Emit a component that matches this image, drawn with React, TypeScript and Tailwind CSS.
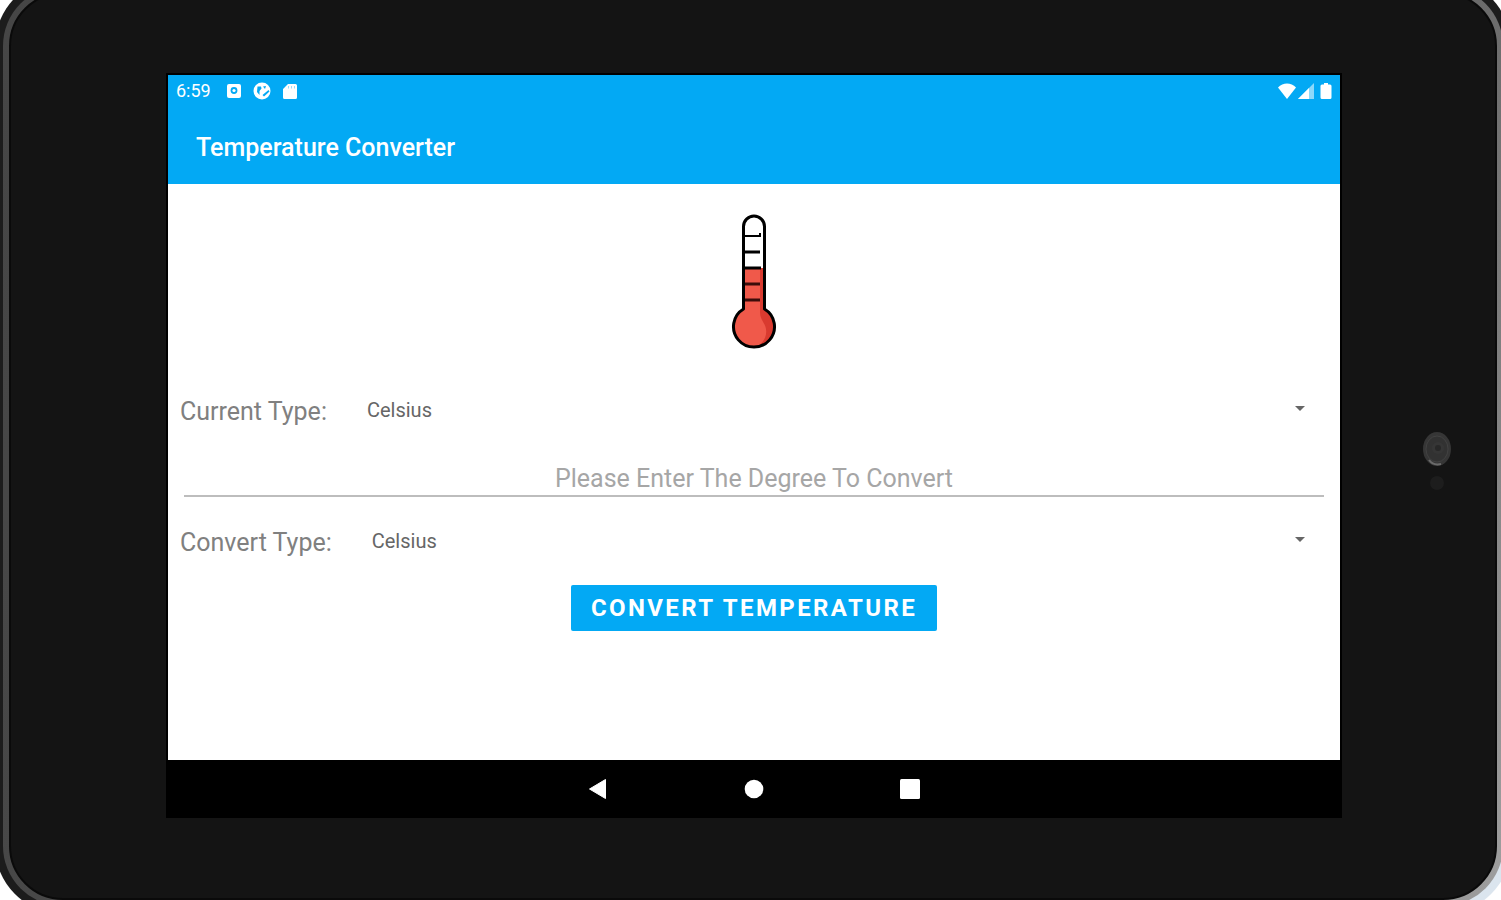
import { useState } from "react";
import { MdArrowDropDown } from "react-icons/md";

type Unit = "Celsius" | "Fahrenheit" | "Kelvin";

const units: Unit[] = ["Celsius", "Fahrenheit", "Kelvin"];

interface TypeRowProps {
  id: string;
  label: string;
  value: Unit;
  onChange: (unit: Unit) => void;
}

function convert(degree: number, from: Unit, to: Unit) {
  let celsius = degree;
  if (from === "Fahrenheit") celsius = ((degree - 32) * 5) / 9;
  if (from === "Kelvin") celsius = degree - 273.15;

  if (to === "Fahrenheit") return (celsius * 9) / 5 + 32;
  if (to === "Kelvin") return celsius + 273.15;
  return celsius;
}

function StatusBar() {
  return (
    <div className="flex h-8 items-center justify-between px-2 text-white">
      <div className="flex items-center gap-3">
        <span className="mr-1 text-lg leading-8">6:59</span>
        <svg width="14" height="14" viewBox="0 0 14 14" aria-hidden="true">
          <rect width="14" height="14" rx="2" fill="#fff" />
          <circle cx="7" cy="6.5" r="3.4" fill="#03a9f4" />
          <circle cx="7" cy="6.5" r="1.6" fill="#fff" />
        </svg>
        <svg width="18" height="18" viewBox="0 0 18 18" aria-hidden="true">
          <circle cx="9" cy="9" r="8.5" fill="#fff" />
          <path d="M4.500 4.500h3.500l.5 2-2 2.500v4L4 10z" fill="#03a9f4" />
          <path d="M10 4.500l3-.5-1 3zM15.500 8l1 1.500-5.500 5-1.500-1.500z" fill="#03a9f4" />
        </svg>
        <svg width="14" height="17" viewBox="0 0 14 17" aria-hidden="true">
          <path d="M5 1h7.500A1.500 1.500 0 0 1 14 2.500v12a1.500 1.500 0 0 1-1.500 1.500h-11A1.500 1.500 0 0 1 0 14.500V6z" fill="#fff" />
          <path d="M5.500 3v2.500M8.500 3v2.500M11.500 3v2.500" stroke="#03a9f4" strokeOpacity=".4" />
        </svg>
      </div>
      <div className="flex items-center gap-0.5">
        <svg width="18" height="16" viewBox="0 0 18 16" aria-hidden="true">
          <path d="M9 16L0 4.500C5-.8 13-.8 18 4.500z" fill="#fff" />
        </svg>
        <svg width="16" height="16" viewBox="0 0 16 16" aria-hidden="true">
          <path d="M0 16L16 0v16z" fill="#fff" fillOpacity=".55" />
          <path d="M0 16L11 5v11z" fill="#fff" />
        </svg>
        <svg className="ml-1" width="12" height="16" viewBox="0 0 12 16" aria-hidden="true">
          <path d="M4 0h4v1.500h2A1.500 1.500 0 0 1 11.500 3v11.500A1.500 1.500 0 0 1 10 16H2a1.500 1.500 0 0 1-1.500-1.500V3A1.500 1.500 0 0 1 2 1.500h2z" fill="#fff" />
        </svg>
      </div>
    </div>
  );
}

function Thermometer() {
  return (
    <svg width="46" height="136" viewBox="0 0 46 136" role="img" aria-label="Thermometer">
      <path
        d="M12.500 95V12.500a10.500 10.500 0 0 1 21 0V95A20.500 20.500 0 1 1 12.500 95z"
        fill="#fff"
      />
      <path d="M12.500 54h21v41A20.500 20.500 0 1 1 12.500 95z" fill="#f0594a" />
      <path d="M29 54h4.500v41a20.500 20.500 0 0 1-9 38.500c10-5 13-15 9-23-2-4-4.500-7-4.500-12z" fill="#d93a2f" />
      <path d="M12 22h17v-3" fill="none" stroke="#000" strokeWidth="2" />
      <path d="M12 38h17M12 54h18" fill="none" stroke="#000" strokeWidth="3" />
      <path d="M12 70h17M12 86h17" fill="none" stroke="#3a0d0a" strokeWidth="3" />
      <path
        d="M12.500 95V12.500a10.500 10.500 0 0 1 21 0V95A20.500 20.500 0 1 1 12.500 95z"
        fill="none"
        stroke="#000"
        strokeWidth="3"
        strokeLinejoin="round"
      />
    </svg>
  );
}

function TypeRow({ id, label, value, onChange }: TypeRowProps) {
  return (
    <div className="flex items-end gap-9 px-3">
      <label htmlFor={id} className="text-[25px] leading-9 text-[#808080]">
        {label}
      </label>
      <div className="relative flex-1">
        <select
          id={id}
          value={value}
          onChange={(e) => onChange(e.target.value as Unit)}
          className="block h-10 w-full appearance-none bg-transparent pl-1 text-xl text-[#666666] outline-none"
        >
          {units.map((unit) => (
            <option key={unit} value={unit}>
              {unit}
            </option>
          ))}
        </select>
        <MdArrowDropDown className="pointer-events-none absolute right-4 top-1.5 size-6 text-[#666666]" />
      </div>
    </div>
  );
}

function NavBar() {
  return (
    <nav className="flex h-[58px] items-center justify-center gap-[136px] bg-black">
      <button type="button" aria-label="Back">
        <svg width="20" height="22" viewBox="0 0 20 22" aria-hidden="true">
          <path d="M1.500 11L17.500 1.500v19z" fill="#fff" stroke="#fff" strokeLinejoin="round" />
        </svg>
      </button>
      <button type="button" aria-label="Home">
        <svg width="20" height="20" viewBox="0 0 20 20" aria-hidden="true">
          <circle cx="10" cy="10" r="9.300" fill="#fff" />
        </svg>
      </button>
      <button type="button" aria-label="Recent apps">
        <svg width="20" height="20" viewBox="0 0 20 20" aria-hidden="true">
          <rect width="20" height="20" rx="1.500" fill="#fff" />
        </svg>
      </button>
    </nav>
  );
}

export default function App() {
  const [currentType, setCurrentType] = useState<Unit>("Celsius");
  const [convertType, setConvertType] = useState<Unit>("Celsius");
  const [degree, setDegree] = useState("");

  const handleConvert = () => {
    if (degree.trim() === "" || Number.isNaN(Number(degree))) return;
    setDegree(convert(Number(degree), currentType, convertType).toFixed(2));
  };

  return (
    <div className="flex min-h-screen overflow-hidden bg-white font-[Roboto,sans-serif]">
      {/* Tablet body */}
      <div className="-mb-3.5 -ml-[5px] -mr-2.5 -mt-[22px] flex flex-1 rounded-[68px] bg-[linear-gradient(135deg,#1c1c1c_94%,#dbe5ee_96%)] p-2">
        <div className="flex flex-1 rounded-[60px] bg-[linear-gradient(110deg,#464646_0%,#4a4a4a_40%,#6c6c6c_82%,#a0a0a0_100%)] p-1.5">
          <div className="flex flex-1 rounded-[54px] border-2 border-[#0a0a0a] bg-[#141414] pb-20 pl-[155px] pt-[79px]">
            {/* Screen */}
            <div className="flex flex-1 flex-col border-2 border-b-0 border-black bg-white">
              <header className="bg-[#03a9f4]">
                <StatusBar />
                <h1 className="px-7 pt-1 text-[25px] font-medium leading-[73px] text-white">
                  Temperature Converter
                </h1>
              </header>

              <main className="flex flex-1 flex-col pt-[30px]">
                <div className="mb-10 flex justify-center">
                  <Thermometer />
                </div>

                <TypeRow id="current-type" label="Current Type:" value={currentType} onChange={setCurrentType} />

                <input
                  type="text"
                  inputMode="decimal"
                  aria-label="Degree"
                  placeholder="Please Enter The Degree To Convert"
                  value={degree}
                  onChange={(e) => setDegree(e.target.value)}
                  className="mx-4 mb-6 mt-7 h-[39px] border-b-2 border-[#bdbdbd] pt-1 text-center text-[25px] text-[#555555] outline-none placeholder:text-[#a6a6a6]"
                />

                <TypeRow id="convert-type" label="Convert Type:" value={convertType} onChange={setConvertType} />

                <button
                  type="button"
                  onClick={handleConvert}
                  className="mt-6 h-[46px] self-center rounded-xs bg-[#03a9f4] px-5 text-2xl font-bold uppercase tracking-widest text-white"
                >
                  Convert Temperature
                </button>
              </main>

              <NavBar />
            </div>

            {/* Front camera */}
            <div className="flex w-[153px] flex-col items-end justify-center pr-11 pt-9">
              <svg width="28" height="66" viewBox="0 0 28 66" aria-hidden="true">
                <ellipse cx="14" cy="18" rx="14" ry="17" fill="#363636" />
                <ellipse cx="14" cy="18" rx="11" ry="13" fill="#323232" stroke="#424242" />
                <circle cx="15" cy="17" r="6" fill="#363636" />
                <circle cx="15" cy="17" r="3" fill="#282828" />
                <path d="M6 29c3 4 8 5 12 4" fill="none" stroke="#6a6a6a" strokeWidth="2" />
                <circle cx="14" cy="52" r="7" fill="#1d1d1d" />
              </svg>
            </div>
          </div>
        </div>
      </div>
    </div>
  );
}
